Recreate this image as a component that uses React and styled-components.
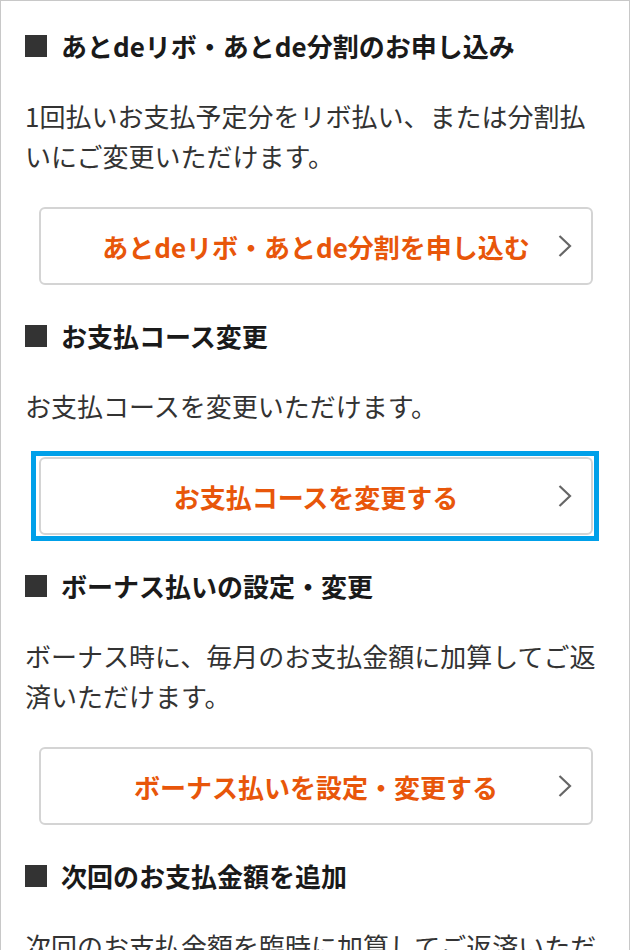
import React from 'react';
import styled, { createGlobalStyle } from 'styled-components';

const GlobalStyle = createGlobalStyle`
  html, body {
    margin: 0;
    padding: 0;
    background: #fff;
  }
  body {
    font-family: "Noto Sans CJK JP", "Noto Sans", sans-serif;
    color: #333;
  }
`;

const sections = [
  {
    title: 'あとdeリボ・あとde分割のお申し込み',
    text: '1回払いお支払予定分をリボ払い、または分割払いにご変更いただけます。',
    button: 'あとdeリボ・あとde分割を申し込む',
  },
  {
    title: 'お支払コース変更',
    text: 'お支払コースを変更いただけます。',
    button: 'お支払コースを変更する',
    focused: true,
  },
  {
    title: 'ボーナス払いの設定・変更',
    text: 'ボーナス時に、毎月のお支払金額に加算してご返済いただけます。',
    button: 'ボーナス払いを設定・変更する',
  },
  {
    title: '次回のお支払金額を追加',
    text: '次回のお支払金額を臨時に加算してご返済いただけます。',
    button: '次回のお支払金額を追加する',
  },
];

const Frame = styled.div`
  box-sizing: border-box;
  width: 630px;
  height: 950px;
  overflow: hidden;
  border: 1px solid #c8c8c8;
  border-bottom: none;
  padding: 25px 24px 0 24px;
  display: flex;
  flex-direction: column;
  gap: 30px;
`;

const Heading = styled.h2`
  display: flex;
  align-items: center;
  gap: 14px;
  margin: 0;
  font-size: 26px;
  line-height: 40px;
  font-weight: 700;
  color: #1a1a1a;

  &::before {
    content: '';
    flex: none;
    width: 22px;
    height: 22px;
    background: #333;
  }
`;

const Text = styled.p`
  margin: 0;
  font-size: 26px;
  line-height: 40px;
  color: #333;
`;

const ButtonRow = styled.div`
  padding: 1px 12px 1px 14px;
`;

const LinkButton = styled.a`
  box-sizing: border-box;
  position: relative;
  display: flex;
  align-items: center;
  justify-content: center;
  height: 78px;
  border: 2px solid #d4d4d4;
  border-radius: 6px;
  background: #fff;
  color: #e8560a;
  font-size: 26px;
  font-weight: 700;
  text-decoration: none;
  cursor: pointer;
  outline: none;

  &::after {
    content: '';
    display: ${({ $focused }) => ($focused ? 'block' : 'none')};
    position: absolute;
    inset: -8px -8px -8px -10px;
    border: 5px solid #00a0e9;
    pointer-events: none;
  }
`;

const Chevron = styled.svg`
  position: absolute;
  right: 19px;
  top: 50%;
  transform: translateY(-50%);
`;

const Arrow = () => (
  <Chevron width="14" height="22" viewBox="0 0 14 22">
    <polyline points="1.5,1 12,11 1.5,21" fill="none" stroke="#666" strokeWidth="2.2" />
  </Chevron>
);

export default function App() {
  return (
    <>
      <GlobalStyle />
      <Frame>
        {sections.map((s) => (
          <React.Fragment key={s.title}>
            <Heading>{s.title}</Heading>
            <Text>{s.text}</Text>
            <ButtonRow>
              <LinkButton href="#" $focused={s.focused}>
                {s.button}
                <Arrow />
              </LinkButton>
            </ButtonRow>
          </React.Fragment>
        ))}
      </Frame>
    </>
  );
}
